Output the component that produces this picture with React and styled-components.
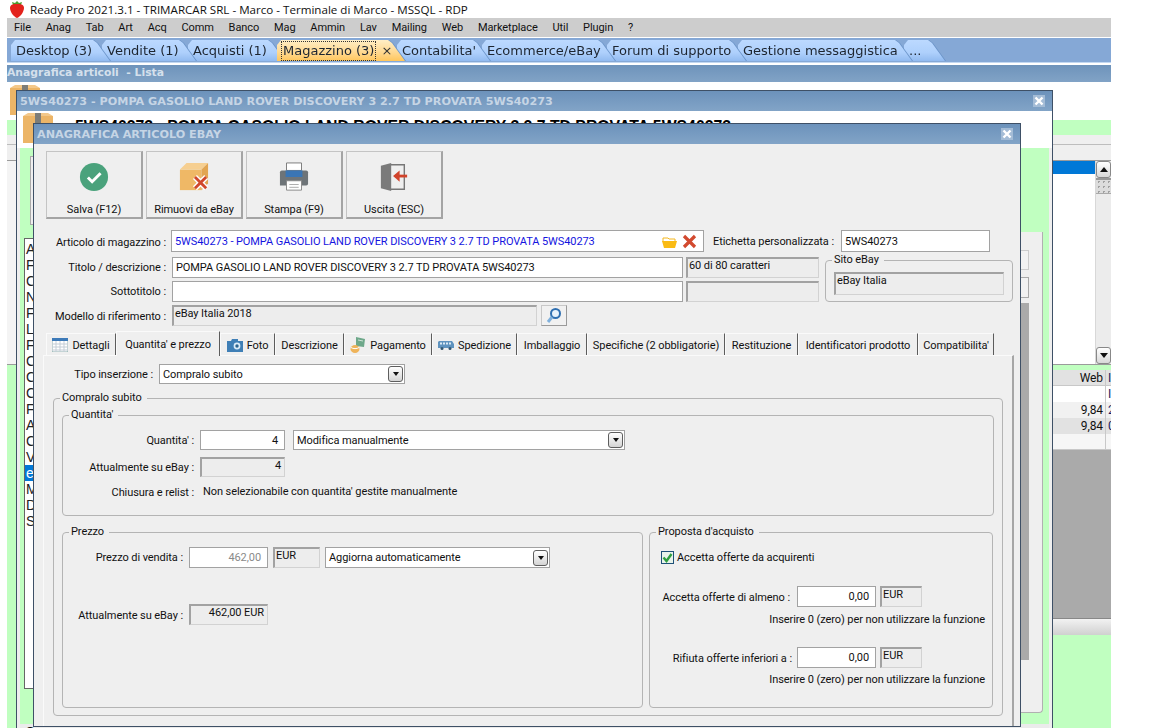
import styled, { createGlobalStyle } from "styled-components";

const GlobalStyle = createGlobalStyle`
  * { box-sizing: border-box; }
  html, body { margin: 0; background: #fff; overflow: hidden; }
  body { font-family: Roboto, "Liberation Sans", sans-serif; font-size: 11px; letter-spacing: -0.08px; color: #111; }
`;

const Page = styled.div`
  width: 1152px;
  height: 728px;
  overflow: hidden;
`;

const TitleBar = styled.div`
  height: 18px;
  display: flex;
  align-items: center;
  padding-left: 9px;
  gap: 5px;
  font-family: "Open Sans", sans-serif;
  font-size: 11.6px;
  letter-spacing: 0;
  color: #111;
  white-space: nowrap;
`;

const MenuBar = styled.div`
  margin-left: 7px;
  width: 1104px;
  height: 19px;
  padding-left: 7px;
  background: #cdcdcd;
  display: flex;
  align-items: center;
  gap: 14.8px;
`;

const AppTabs = styled.div`
  margin: 1px 0 0 7px;
  width: 1104px;
  height: 25px;
  padding: 2px 0 1px 4px;
  background: #85a8d6;
  border-bottom: 1px solid #c3d8f2;
  display: flex;
`;

const AppTab = styled.div`
  position: relative;
  z-index: ${(p) => p.$z};
  width: ${(p) => p.$w}px;
  flex: none;
  padding-left: 5px;
  display: flex;
  align-items: center;
  font-family: "DejaVu Sans", sans-serif;
  font-size: 13px;
  letter-spacing: 0;
  color: #1d2530;
  white-space: nowrap;
  filter: drop-shadow(1px 0 0 #6a93c8);
  &::before {
    content: "";
    position: absolute;
    inset: 0 -8px 0 0;
    z-index: -1;
    background: ${(p) =>
      p.$active
        ? "linear-gradient(#ffeec6, #ffd88f 60%, #ffc65c)"
        : "linear-gradient(#bcd9ff, #aed0fc 60%, #92bbf0)"};
    clip-path: polygon(0 100%, 0 5px, 4px 0, calc(100% - 17px) 0, calc(100% - 13px) 3px, 100% 100%);
  }
`;

const FocusText = styled.span`
  outline: 1px dotted #333;
  padding: 2px 1px;
  line-height: 14px;
`;

const TabClose = styled.span`
  margin-left: 6px;
  font-size: 13px;
  color: #333;
`;

const SectionHeader = styled.div`
  margin: 2px 0 0 7px;
  width: 1104px;
  height: 17px;
  background: linear-gradient(#6e93bb, #81a3c6);
  color: #d5e0ec;
  font-family: "DejaVu Sans", sans-serif;
  font-weight: bold;
  font-size: 10.8px;
  letter-spacing: 0;
  line-height: 16px;
  white-space: pre;
`;

/* free canvas holding the stacked windows */
const Desktop = styled.div`
  position: relative;
  margin-left: 7px;
  width: 1104px;
  height: 646px;
  overflow: hidden;
  background: #c0ffc0;
`;

const ListHead = styled.div`
  height: 38px;
  padding: 3px 0 0 3px;
  background: #fff;
`;

const GreenBand = styled.div`
  height: ${(p) => p.$h}px;
  background: #c0ffc0;
`;

const FilterStrip = styled.div`
  height: 25px;
  background: #efefef;
  position: relative;
  &::after {
    content: "";
    position: absolute;
    left: 0;
    right: 0;
    top: 9px;
    height: 1px;
    background: #bdbdbd;
  }
`;

const ListArea = styled.div`
  height: 205px;
  display: flex;
  padding-left: 10px;
  background: #f4f4f4;
  border-top: 1px solid #9b9b9b;
  border-bottom: 1px solid #9b9b9b;
`;

const ListBody = styled.div`
  flex: 1;
  background: #fff;
`;

const SelectedRow = styled.div`
  height: 13px;
  background: #0078d7;
`;

const Scrollbar = styled.div`
  width: 16px;
  display: flex;
  flex-direction: column;
  background: #ececec;
  border-left: 1px solid #d8d8d8;
`;

const ScrollThumb = styled.div`
  height: 16px;
  background: radial-gradient(circle, #a0a0a0 1px, transparent 1px) center / 5px 5px #dcdcdc;
  border-top: 2px solid #999;
  border-bottom: 1px solid #aaa;
`;

const ScrollSpace = styled.div`
  flex: 1;
`;

const ScrollBtn = styled.div`
  height: 17px;
  background: linear-gradient(#fff, #d8d8d8);
  border: 1px solid #888;
  border-radius: 3px;
  display: flex;
  align-items: center;
  justify-content: center;
  &::after {
    content: "";
    border-left: 4px solid transparent;
    border-right: 4px solid transparent;
    ${(p) => (p.$up ? "border-bottom: 5px solid #111;" : "border-top: 5px solid #111;")}
  }
`;

const BackTable = styled.div`
  margin-left: auto;
  width: 58px;
  height: 265px;
  display: flex;
  flex-direction: column;
  background: #aaa;
  font-size: 12px;
`;

const BackRow = styled.div`
  height: ${(p) => p.$h || 16}px;
  flex: none;
  display: flex;
  background: ${(p) => p.$bg};
  border-bottom: ${(p) => (p.$line ? "1px solid #c8c8c8" : "0")};
`;

const BackCell = styled.div`
  width: 53px;
  padding-right: 2px;
  text-align: right;
  line-height: 16px;
  border-right: 1px solid #c8c8c8;
`;

const BackNext = styled.div`
  flex: 1;
  padding-left: 2px;
  overflow: hidden;
  line-height: 16px;
  color: #1a1a60;
`;

const BackGap = styled.div`
  flex: 1;
`;

const BackFoot = styled.div`
  height: 17px;
  flex: none;
  background: linear-gradient(#f2f2f2, #d0d0d0);
  border-top: 1px solid #888;
`;

/* windows on the desktop */
const Window = styled.div`
  position: absolute;
  left: ${(p) => p.$x}px;
  top: ${(p) => p.$y}px;
  width: ${(p) => p.$w}px;
  height: ${(p) => p.$h}px;
  display: flex;
  flex-direction: column;
  background: #efefef;
  border: 1px solid #3e5066;
  overflow: hidden;
`;

const WindowTitle = styled.div`
  height: 20px;
  flex: none;
  padding: 0 7px 0 3px;
  display: flex;
  align-items: center;
  justify-content: space-between;
  background: linear-gradient(#6c92bb, #82a4c7);
  color: #c6d5e5;
  font-family: "DejaVu Sans", sans-serif;
  font-weight: bold;
  font-size: 11.2px;
  letter-spacing: 0;
  white-space: nowrap;
`;

const CloseBox = styled.span`
  width: 12px;
  height: 12px;
  background: #a4bcd6;
  display: flex;
  align-items: center;
  justify-content: center;
`;

const ArticleHead = styled.div`
  height: 37px;
  flex: none;
  padding: 2px 0 0 6px;
  display: flex;
  background: #fff;
  gap: 22px;
  overflow: hidden;
`;

const BigTitle = styled.div`
  font-family: "Liberation Sans", sans-serif;
  font-size: 15.8px;
  letter-spacing: 0;
  font-weight: bold;
  color: #000;
  white-space: nowrap;
  margin-top: 5px;
`;

const BehindArea = styled.div`
  flex: 1;
  margin-left: 3px;
  margin-right: 3px;
  display: flex;
  background: #c0ffc0;
`;

const BehindLeft = styled.div`
  padding: 8px 0 0 4px;
  width: 30px;
`;

const StubButton = styled.div`
  margin-left: 6px;
  height: 69px;
  background: #efefef;
  border: 1px solid #aaa;
`;

const ClippedList = styled.div`
  margin-top: 13px;
  height: 451px;
  padding-top: 2px;
  background: #fff;
  border: 1px solid #666;
  font-family: "Liberation Sans", sans-serif;
  font-size: 14px;
  line-height: 16px;
  overflow: hidden;
`;

const ClippedItem = styled.div`
  padding-left: 1px;
  color: ${(p) => (p.$sel ? "#fff" : "#222")};
  background: ${(p) => (p.$sel ? "#0078d7" : "transparent")};
`;

const BehindPanel = styled.div`
  margin: 84px 6px 11px auto;
  width: 22px;
  background: #efefef;
  border-right: 1px solid #b0b0b0;
  border-bottom: 1px solid #b0b0b0;
  border-radius: 0 0 4px 0;
  padding-top: 18px;
`;

const StubInput = styled.div`
  width: 8px;
  height: 20px;
  background: #f2f2f2;
  border: 1px solid #ccc;
  border-left: 0;
`;

const StubPick = styled.div`
  width: 8px;
  height: 21px;
  margin-top: 7px;
  background: #f2f2f2;
  border: 1px solid #aaa;
  border-left: 0;
  overflow: hidden;
`;

const StubColumn = styled.div`
  width: 8px;
  height: 357px;
  margin-top: 5px;
  background: #aaa;
`;

const BehindFoot = styled.div`
  height: 15px;
  flex: none;
  margin: 0 3px;
  padding-left: 5px;
  background: #ebebeb;
  font-family: "Liberation Sans", sans-serif;
  font-size: 14px;
  line-height: 17px;
  overflow: hidden;
`;

const DialogBody = styled.div`
  flex: 1;
  padding-left: 9px;
`;

const Toolbar = styled.div`
  margin: 7px 0 0 3px;
  display: flex;
  gap: 3px;
`;

const ToolButton = styled.div`
  width: 97px;
  height: 68px;
  padding-top: 10px;
  display: flex;
  flex-direction: column;
  align-items: center;
  background: #efefef;
  border: 1px solid #c4c4c4;
  border-right: 2px solid #a4a4a4;
  border-bottom: 2px solid #a4a4a4;
`;

const ToolLabel = styled.div`
  margin-top: 11px;
  line-height: 14px;
`;

const Row = styled.div`
  margin: ${(p) => p.$top || 0}px 0 0 ${(p) => p.$left || 0}px;
  height: ${(p) => p.$h || 20}px;
  display: flex;
  align-items: center;
`;

const Label = styled.div`
  width: ${(p) => p.$w}px;
  margin-right: ${(p) => p.$gap ?? 6}px;
  padding-top: ${(p) => p.$drop || 0}px;
  flex: none;
  text-align: right;
  white-space: nowrap;
`;

const Input = styled.div`
  width: ${(p) => p.$w}px;
  height: 100%;
  margin-right: ${(p) => p.$gap || 0}px;
  flex: none;
  display: flex;
  align-items: center;
  justify-content: ${(p) => (p.$right ? "flex-end" : "flex-start")};
  padding: 0 ${(p) => (p.$right ? 6 : 3)}px 0 3px;
  background: #fff;
  border: 1px solid #a2a2a2;
  color: ${(p) => p.$color || "#111"};
  white-space: nowrap;
  overflow: hidden;
`;

const Readonly = styled.div`
  width: ${(p) => p.$w}px;
  height: 100%;
  margin-right: ${(p) => p.$gap || 0}px;
  flex: none;
  padding: 0 ${(p) => (p.$right ? 3 : 0)}px 0 1px;
  text-align: ${(p) => (p.$right ? "right" : "left")};
  background: #ededed;
  border-top: 2px solid #a2a2a2;
  border-left: 2px solid #a2a2a2;
  border-right: 1px solid #d2d2d2;
  border-bottom: 1px solid #d2d2d2;
  white-space: nowrap;
`;

const FieldIcons = styled.span`
  margin-left: auto;
  display: flex;
  align-items: center;
  gap: 5px;
  padding-right: 3px;
`;

const SelectBox = styled(Input)`
  padding-right: 1px;
  justify-content: space-between;
`;

const ArrowBtn = styled.span`
  width: 15px;
  height: 16px;
  flex: none;
  display: flex;
  align-items: center;
  justify-content: center;
  background: linear-gradient(#fff, #d4d4d4);
  border: 1px solid #5e5e5e;
  border-radius: 3px;
  &::after {
    content: "";
    border-left: 3.5px solid transparent;
    border-right: 3.5px solid transparent;
    border-top: 4px solid #111;
  }
`;

const MidBlock = styled.div`
  margin: 5px 0 0 3px;
  display: flex;
`;

const MidColumn = styled.div`
  display: flex;
  flex-direction: column;
  gap: 3px;
`;

const Group = styled.div`
  position: relative;
  width: ${(p) => p.$w}px;
  height: ${(p) => p.$h}px;
  flex: none;
  margin: ${(p) => p.$top || 0}px 0 0 ${(p) => p.$left || 0}px;
  border: 1px solid #b4b4b4;
  border-radius: 4px;
`;

const Legend = styled.span`
  position: absolute;
  left: 6px;
  top: -8px;
  padding: 0 5px 0 2px;
  background: #efefef;
  line-height: 14px;
  white-space: nowrap;
`;

const SearchBtn = styled.div`
  width: 26px;
  height: 21px;
  margin-left: 4px;
  display: flex;
  align-items: center;
  justify-content: center;
  background: #f1f1f1;
  border: 1px solid #c8c8c8;
  border-right-color: #9a9a9a;
  border-bottom-color: #9a9a9a;
`;

const TabStrip = styled.div`
  margin: 6px 0 0 3px;
  height: 23px;
  display: flex;
  align-items: flex-end;
  position: relative;
  z-index: 1;
`;

const Tab = styled.div`
  width: ${(p) => p.$w}px;
  height: ${(p) => (p.$active ? 25 : 22)}px;
  margin-bottom: ${(p) => (p.$active ? -1 : 0)}px;
  padding-top: 1px;
  flex: none;
  display: flex;
  align-items: center;
  justify-content: center;
  gap: 4px;
  background: #efefef;
  border-top: 1px solid #fafafa;
  border-left: 1px solid #fafafa;
  border-right: 1px solid #5c5c5c;
  white-space: nowrap;
`;

const TabPane = styled.div`
  width: 971px;
  height: 372px;
  border-top: 1px solid #fafafa;
  border-left: 1px solid #fafafa;
  border-right: 2px solid #a6a6a6;
  padding-left: 9px;
`;

const PlainText = styled.div`
  white-space: nowrap;
`;

const SplitRow = styled.div`
  margin-top: 16px;
  display: flex;
`;

const CheckBox = styled.span`
  width: 13px;
  height: 13px;
  margin-right: 3px;
  flex: none;
  background: #e9f3ea;
  border: 1px solid #1e5078;
  display: flex;
  align-items: center;
  justify-content: center;
`;

const HelpText = styled.div`
  margin-top: ${(p) => p.$top}px;
  padding-right: 7px;
  line-height: 13px;
  text-align: right;
`;

const Strawberry = () => (
  <svg width="16" height="17" viewBox="0 0 16 17">
    <path d="M8 0l2 2 3-1-1 3H4L3 1l3 1z" fill="#4f9a2f" />
    <path d="M8 3c3 0 7 0 7 4 0 4-4 9-7 10C5 16 1 11 1 7c0-4 4-4 7-4z" fill="#e3221c" />
  </svg>
);

const XMark = () => (
  <svg width="10" height="10" viewBox="0 0 10 10">
    <path d="M1.5 1.5l7 7M8.5 1.5l-7 7" stroke="#fff" strokeWidth="2.4" />
  </svg>
);

const BoxIcon = ({ size = 30 }) => (
  <svg width={size} height={size} viewBox="0 0 30 30">
    <path d="M0 3h30v27H0z" fill="#ecb567" />
    <path d="M12 0h6v12h-6z" fill="#7d7d78" />
    <path d="M0 3l5-3h7v3zM18 0h7l5 3H18z" fill="#f3c88a" />
  </svg>
);

const CheckIcon = () => (
  <svg width="32" height="32" viewBox="0 0 32 32">
    <circle cx="16" cy="16" r="15" fill="#4aa27c" />
    <path d="M9.5 16.5l4.5 4.5 9-9" fill="none" stroke="#fff" strokeWidth="3.2" />
  </svg>
);

const RemoveBoxIcon = () => (
  <svg width="32" height="32" viewBox="0 0 32 32">
    <path d="M1 8v22h23V8z" fill="#efb866" />
    <path d="M1 8l7-7h23l-7 7z" fill="#f6cf91" />
    <path d="M24 8l7-7v22l-7 7z" fill="#e2a552" />
    <path d="M17 16l12 12M29 16L17 28" stroke="#fff" strokeWidth="6" />
    <path d="M17 16l12 12M29 16L17 28" stroke="#d0482c" strokeWidth="3" />
  </svg>
);

const PrinterIcon = () => (
  <svg width="32" height="32" viewBox="0 0 32 32">
    <path d="M8 1h16v8H8z" fill="#fff" stroke="#777" />
    <path d="M3 9h26a2 2 0 0 1 2 2v12a2 2 0 0 1-2 2H1V11a2 2 0 0 1 2-2z" fill="#6e7478" />
    <path d="M7 9h18v7H7z" fill="#3a75b4" />
    <path d="M8 20h16v10H8z" fill="#fff" stroke="#888" />
    <path d="M11 24h10M11 27h10" stroke="#aaa" />
  </svg>
);

const ExitIcon = () => (
  <svg width="32" height="32" viewBox="0 0 32 32">
    <path d="M12 3h15v26H12" fill="none" stroke="#777" strokeWidth="1.5" />
    <path d="M2 4l11-3v30L2 28z" fill="#7a7a7a" />
    <path d="M30 15H17" stroke="#d1432b" strokeWidth="3" />
    <path d="M22 9l-7 6 7 6" fill="#d1432b" />
  </svg>
);

const FolderIcon = () => (
  <svg width="15" height="13" viewBox="0 0 15 13">
    <path d="M1 3h5l1 1h6v3H1z" fill="#fff" stroke="#f4b71e" />
    <path d="M0 6h15l-2 7H2z" fill="#fabb14" />
  </svg>
);

const RedX = () => (
  <svg width="15" height="15" viewBox="0 0 15 15">
    <path d="M2 2l11 11M13 2L2 13" stroke="#d2492f" strokeWidth="3.2" />
  </svg>
);

const SearchIcon = () => (
  <svg width="18" height="17" viewBox="0 0 18 17">
    <circle cx="10.5" cy="6.5" r="4.5" fill="#e8f2fb" stroke="#2f6fb0" strokeWidth="2" />
    <path d="M7 10l-4 5" stroke="#7fb0dc" strokeWidth="3" />
  </svg>
);

const CalendarIcon = () => (
  <svg width="16" height="14" viewBox="0 0 16 14">
    <path d="M0 0h16v14H0z" fill="#fff" stroke="#8aa" />
    <path d="M0 0h16v3H0z" fill="#3d7ab8" />
    <path d="M0 6h16M0 9h16M0 12h16M4 3v11M8 3v11M12 3v11" stroke="#c4cdd6" />
  </svg>
);

const CameraIcon = () => (
  <svg width="16" height="13" viewBox="0 0 16 13">
    <path d="M0 2h4l1-2h6v2h5v11H0z" fill="#3f7fb6" />
    <circle cx="10" cy="7" r="3.4" fill="#dcecf8" />
    <circle cx="10" cy="7" r="1.7" fill="#2b648f" />
  </svg>
);

const MoneyIcon = () => (
  <svg width="16" height="16" viewBox="0 0 16 16">
    <path d="M6 0l9 2-1 8-8-1z" fill="#6ea88a" />
    <path d="M8 3l5 1" stroke="#cfe3d6" />
    <ellipse cx="5" cy="12" rx="4.5" ry="4" fill="#efb45a" />
    <path d="M1 10.5c2 1.5 6 1.5 8 0" stroke="#fff" fill="none" />
  </svg>
);

const BusIcon = () => (
  <svg width="16" height="10" viewBox="0 0 16 10">
    <path d="M1 1h13l2 3v4H0V2z" fill="#5f93bf" />
    <path d="M2 2.5h2v2H2zM5 2.5h2v2H5zM8 2.5h2v2H8zM11 2.5h2v2h-2z" fill="#dcebf6" />
    <circle cx="4" cy="8.5" r="1.5" fill="#34566f" />
    <circle cx="12" cy="8.5" r="1.5" fill="#34566f" />
  </svg>
);

const TickIcon = () => (
  <svg width="11" height="11" viewBox="0 0 11 11">
    <path d="M1.5 5.5l3 3.5 5-7" fill="none" stroke="#2e9e3f" strokeWidth="2.4" />
  </svg>
);

const menuItems = ["File", "Anag", "Tab", "Art", "Acq", "Comm", "Banco", "Mag", "Ammin", "Lav", "Mailing", "Web", "Marketplace", "Util", "Plugin", "?"];

const appTabs = [
  { label: "Desktop (3)", w: 91 },
  { label: "Vendite (1)", w: 86 },
  { label: "Acquisti (1)", w: 89 },
  { label: "Magazzino (3)", w: 120, active: true },
  { label: "Contabilita'", w: 85 },
  { label: "Ecommerce/eBay", w: 125 },
  { label: "Forum di supporto", w: 131 },
  { label: "Gestione messaggistica", w: 166 },
  { label: "...", w: 33 },
];

const letters = ["A", "F", "C", "N", "F", "L", "F", "C", "C", "C", "F", "A", "C", "V", "e", "M", "D", "S"];

const dialogTabs = [
  { label: "Dettagli", w: 70, icon: <CalendarIcon /> },
  { label: "Quantita' e prezzo", w: 104, active: true },
  { label: "Foto", w: 55, icon: <CameraIcon /> },
  { label: "Descrizione", w: 69 },
  { label: "Pagamento", w: 88, icon: <MoneyIcon /> },
  { label: "Spedizione", w: 85, icon: <BusIcon /> },
  { label: "Imballaggio", w: 70 },
  { label: "Specifiche (2 obbligatorie)", w: 138 },
  { label: "Restituzione", w: 73 },
  { label: "Identificatori prodotto", w: 120 },
  { label: "Compatibilita'", w: 76 },
];

const title = "5WS40273 - POMPA GASOLIO LAND ROVER DISCOVERY 3 2.7 TD PROVATA 5WS40273";

export default function App() {
  return (
    <Page>
      <GlobalStyle />
      <TitleBar>
        <Strawberry />
        Ready Pro 2021.3.1 - TRIMARCAR SRL - Marco - Terminale di Marco - MSSQL - RDP
      </TitleBar>
      <MenuBar>
        {menuItems.map((m) => (
          <span key={m}>{m}</span>
        ))}
      </MenuBar>
      <AppTabs>
        {appTabs.map((t, i) => (
          <AppTab key={t.label} $w={t.w} $active={t.active} $z={t.active ? 20 : 10 - i}>
            {t.active ? <FocusText>{t.label}</FocusText> : t.label}
            {t.active && <TabClose>×</TabClose>}
          </AppTab>
        ))}
      </AppTabs>
      <SectionHeader>Anagrafica articoli  - Lista</SectionHeader>

      <Desktop>
        <ListHead>
          <BoxIcon />
        </ListHead>
        <GreenBand $h={15} />
        <FilterStrip />
        <ListArea>
          <ListBody>
            <SelectedRow />
          </ListBody>
          <Scrollbar>
            <ScrollBtn $up />
            <ScrollThumb />
            <ScrollSpace />
            <ScrollBtn />
          </Scrollbar>
        </ListArea>
        <GreenBand $h={5} />
        <BackTable>
          <BackRow $h={16} $bg="#e2e2e2" $line>
            <BackCell>Web</BackCell>
            <BackNext>I</BackNext>
          </BackRow>
          <BackRow $bg="#fff">
            <BackCell />
            <BackNext>I</BackNext>
          </BackRow>
          <BackRow $bg="#f1f1f1">
            <BackCell>9,84</BackCell>
            <BackNext>2</BackNext>
          </BackRow>
          <BackRow $bg="#e2e2e2">
            <BackCell>9,84</BackCell>
            <BackNext>0</BackNext>
          </BackRow>
          <BackRow $bg="#f6f6f6" $line>
            <BackCell />
            <BackNext />
          </BackRow>
          <BackGap />
          <BackFoot />
        </BackTable>

        <Window $x={9} $y={8} $w={1037} $h={650}>
          <WindowTitle>
            {title}
            <CloseBox>
              <XMark />
            </CloseBox>
          </WindowTitle>
          <ArticleHead>
            <BoxIcon />
            <BigTitle>{title}</BigTitle>
          </ArticleHead>
          <BehindArea>
            <BehindLeft>
              <StubButton />
              <ClippedList>
                {letters.map((l, i) => (
                  <ClippedItem key={i} $sel={l === "e"}>
                    {l}
                  </ClippedItem>
                ))}
              </ClippedList>
            </BehindLeft>
            <BehindPanel>
              <StubInput />
              <StubPick />
              <StubColumn />
            </BehindPanel>
          </BehindArea>
          <BehindFoot>C</BehindFoot>
        </Window>

        <Window $x={26} $y={41} $w={988} $h={604}>
          <WindowTitle>
            ANAGRAFICA ARTICOLO EBAY
            <CloseBox>
              <XMark />
            </CloseBox>
          </WindowTitle>
          <DialogBody>
            <Toolbar>
              <ToolButton>
                <CheckIcon />
                <ToolLabel>Salva (F12)</ToolLabel>
              </ToolButton>
              <ToolButton>
                <RemoveBoxIcon />
                <ToolLabel>Rimuovi da eBay</ToolLabel>
              </ToolButton>
              <ToolButton>
                <PrinterIcon />
                <ToolLabel>Stampa (F9)</ToolLabel>
              </ToolButton>
              <ToolButton>
                <ExitIcon />
                <ToolLabel>Uscita (ESC)</ToolLabel>
              </ToolButton>
            </Toolbar>

            <Row $top={11} $left={3} $h={22}>
              <Label $w={120} $gap={5} $drop={2}>Articolo di magazzino :</Label>
              <Input $w={533} $color="#1414e0">
                {title}
                <FieldIcons>
                  <FolderIcon />
                  <RedX />
                </FieldIcons>
              </Input>
              <Label $w={130} $gap={7}>Etichetta personalizzata :</Label>
              <Input $w={149}>5WS40273</Input>
            </Row>

            <MidBlock>
              <MidColumn>
                <Row $h={21}>
                  <Label $w={120}>Titolo / descrizione :</Label>
                  <Input $w={511} $gap={3}>POMPA GASOLIO LAND ROVER DISCOVERY 3 2.7 TD PROVATA 5WS40273</Input>
                  <Readonly $w={133}>60 di 80 caratteri</Readonly>
                </Row>
                <Row $h={21}>
                  <Label $w={120}>Sottotitolo :</Label>
                  <Input $w={511} $gap={3} />
                  <Readonly $w={133} />
                </Row>
              </MidColumn>
              <Group $w={188} $h={42} $top={3} $left={6}>
                <Legend>Sito eBay</Legend>
                <Row $top={11} $left={8} $h={23}>
                  <Readonly $w={170}>eBay Italia</Readonly>
                </Row>
              </Group>
            </MidBlock>

            <Row $top={3} $left={3} $h={21}>
              <Label $w={120} $drop={2}>Modello di riferimento :</Label>
              <Readonly $w={365}>eBay Italia 2018</Readonly>
              <SearchBtn>
                <SearchIcon />
              </SearchBtn>
            </Row>

            <TabStrip>
              {dialogTabs.map((t) => (
                <Tab key={t.label} $w={t.w} $active={t.active}>
                  {t.icon}
                  {t.label}
                </Tab>
              ))}
            </TabStrip>

            <TabPane>
              <Row $top={8} $left={0}>
                <Label $w={100}>Tipo inserzione :</Label>
                <SelectBox $w={246}>
                  Compralo subito
                  <ArrowBtn />
                </SelectBox>
              </Row>

              <Group $w={950} $h={318} $top={14}>
                <Legend>Compralo subito</Legend>
                <Group $w={932} $h={101} $top={16} $left={8}>
                  <Legend>Quantita'</Legend>
                  <Row $top={14}>
                    <Label $w={131}>Quantita' :</Label>
                    <Input $w={85} $gap={8} $right>4</Input>
                    <SelectBox $w={332}>
                      Modifica manualmente
                      <ArrowBtn />
                    </SelectBox>
                  </Row>
                  <Row $top={7}>
                    <Label $w={131}>Attualmente su eBay :</Label>
                    <Readonly $w={85} $right>4</Readonly>
                  </Row>
                  <Row $top={7} $h={14}>
                    <Label $w={131} $gap={9} $drop={3}>Chiusura e relist :</Label>
                    <PlainText>Non selezionabile con quantita' gestite manualmente</PlainText>
                  </Row>
                </Group>

                <SplitRow>
                  <Group $w={581} $h={176} $left={8}>
                    <Legend>Prezzo</Legend>
                    <Row $top={14} $h={21}>
                      <Label $w={120}>Prezzo di vendita :</Label>
                      <Input $w={79} $gap={5} $right $color="#8a8a8a">462,00</Input>
                      <Readonly $w={47} $gap={5}>EUR</Readonly>
                      <SelectBox $w={225}>
                        Aggiorna automaticamente
                        <ArrowBtn />
                      </SelectBox>
                    </Row>
                    <Row $top={36} $h={21}>
                      <Label $w={120} $drop={2}>Attualmente su eBay :</Label>
                      <Readonly $w={79} $right>462,00 EUR</Readonly>
                    </Row>
                  </Group>

                  <Group $w={344} $h={176} $left={6}>
                    <Legend>Proposta d'acquisto</Legend>
                    <Row $top={18} $left={11} $h={13}>
                      <CheckBox>
                        <TickIcon />
                      </CheckBox>
                      <PlainText>Accetta offerte da acquirenti</PlainText>
                    </Row>
                    <Row $top={22} $left={11} $h={21}>
                      <Label $w={129} $gap={7} $drop={2}>Accetta offerte di almeno :</Label>
                      <Input $w={79} $gap={4} $right>0,00</Input>
                      <Readonly $w={42}>EUR</Readonly>
                    </Row>
                    <HelpText $top={6}>Inserire 0 (zero) per non utilizzare la funzione</HelpText>
                    <Row $top={21} $left={11} $h={21}>
                      <Label $w={131} $gap={5} $drop={2}>Rifiuta offerte inferiori a :</Label>
                      <Input $w={79} $gap={4} $right>0,00</Input>
                      <Readonly $w={42}>EUR</Readonly>
                    </Row>
                    <HelpText $top={5}>Inserire 0 (zero) per non utilizzare la funzione</HelpText>
                  </Group>
                </SplitRow>
              </Group>
            </TabPane>
          </DialogBody>
        </Window>
      </Desktop>
    </Page>
  );
}
